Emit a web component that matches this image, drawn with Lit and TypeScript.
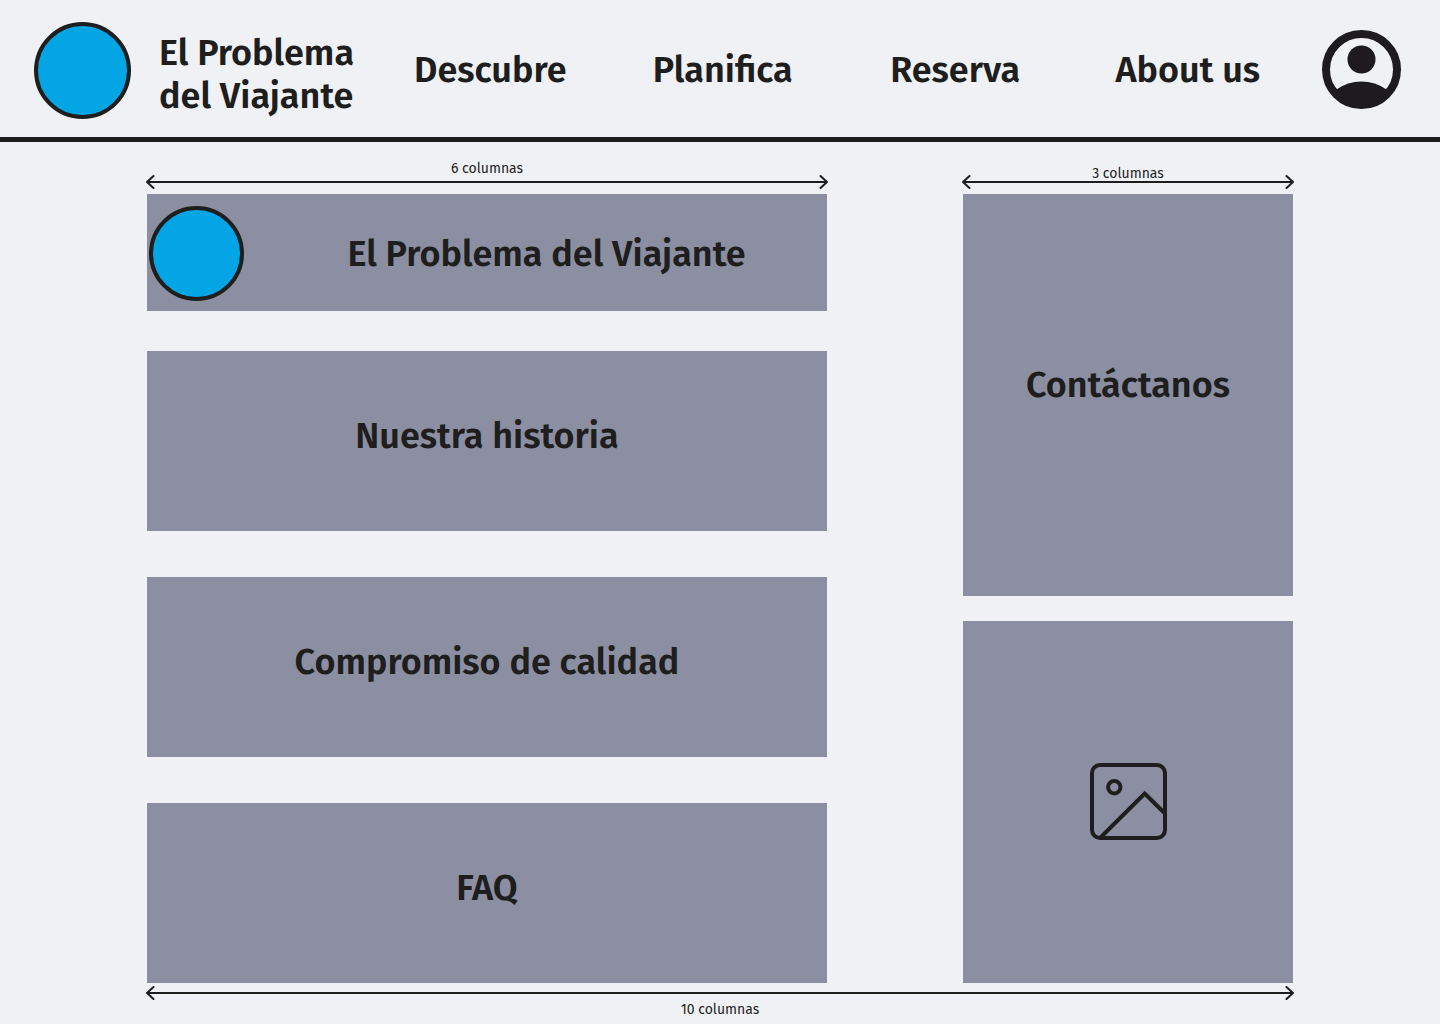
import { LitElement, html, css } from "lit";
import { customElement, property } from "lit/decorators.js";

/** Double-headed arrow that spans a number of grid columns. */
@customElement("column-span")
export class ColumnSpan extends LitElement {
  @property() label = "";
  @property({ reflect: true }) placement: "above" | "close" | "below" = "above";

  static styles = css`
    :host {
      display: flex;
      flex-direction: column;
      align-items: center;
      justify-content: flex-end;
      color: #1e1e1e;
    }
    :host([placement="below"]) {
      flex-direction: column-reverse;
    }
    .label {
      margin-bottom: -3px;
      font-size: 14px;
      line-height: 16px;
    }
    :host([placement="close"]) .label {
      margin-bottom: -8px;
    }
    :host([placement="below"]) .label {
      margin: 1px 0 0;
    }
    .arrow {
      display: flex;
      align-items: center;
      align-self: stretch;
      height: 16px;
      margin: 0 -1px;
    }
    .line {
      flex: 1;
      height: 2px;
      margin: 0 -8px;
      background: currentColor;
    }
    .head {
      flex: none;
      width: 10px;
      height: 16px;
      fill: none;
      stroke: currentColor;
      stroke-width: 2;
      stroke-linecap: round;
      stroke-linejoin: round;
    }
  `;

  render() {
    return html`
      <span class="label">${this.label}</span>
      <div class="arrow" aria-hidden="true">
        <svg class="head" viewBox="0 0 10 16"><path d="M7.5 2 1 8l6.5 6" /></svg>
        <div class="line"></div>
        <svg class="head" viewBox="0 0 10 16"><path d="m2.5 2 6.5 6-6.5 6" /></svg>
      </div>
    `;
  }
}

@customElement("app-root")
export class AppRoot extends LitElement {
  private links = [
    { text: "Descubre", href: "#descubre" },
    { text: "Planifica", href: "#planifica" },
    { text: "Reserva", href: "#reserva" },
    { text: "About us", href: "#about" },
  ];

  private sections = ["Nuestra historia", "Compromiso de calidad", "FAQ"];

  static styles = css`
    :host {
      display: block;
      min-height: 100vh;
      background: #eff1f5;
      color: #1e1e1e;
      font-family: "Fira Sans", "Noto Sans", "Open Sans", sans-serif;
    }
    * {
      box-sizing: border-box;
    }
    .header {
      display: flex;
      align-items: center;
      min-height: 142px;
      padding: 0 39px 0 34px;
      border-bottom: 5px solid #1e1e1e;
    }
    a {
      color: inherit;
      text-decoration: none;
    }
    .brand,
    .link,
    .title {
      margin: 0;
      font-size: 36px;
      font-weight: 600;
      line-height: 43px;
    }
    .brand {
      display: flex;
      align-items: center;
      gap: 28px;
      width: 340px;
      padding-top: 3px;
    }
    .logo {
      flex: none;
      width: 97px;
      height: 97px;
      border: 4px solid #1e1e1e;
      border-radius: 50%;
      background: #04a5e5;
    }
    .brand-name {
      padding-top: 10px;
      white-space: nowrap;
    }
    .nav {
      flex: 1;
      display: grid;
      grid-template-columns: repeat(4, 1fr);
      margin-right: 18px;
      padding-top: 3px;
      text-align: center;
    }
    .link {
      white-space: nowrap;
    }
    .account {
      flex: none;
      width: 79px;
      height: 79px;
      margin-top: 1px;
      padding: 0;
      border: 0;
      background: none;
      color: #1d1b20;
      cursor: pointer;
    }
    .icon {
      display: block;
      width: 100%;
      height: 100%;
    }
    .main {
      display: grid;
      grid-template-columns: 68fr 33fr;
      column-gap: 136px;
      padding: 0 147px;
    }
    .span {
      height: 52px;
      padding-bottom: 4px;
    }
    .span-all {
      grid-column: 1 / -1;
      padding-top: 2px;
    }
    .column {
      display: flex;
      flex-direction: column;
      gap: 46px;
    }
    .side {
      gap: 25px;
    }
    .card {
      display: flex;
      align-items: center;
      justify-content: center;
      min-height: 180px;
      padding-bottom: 10px;
      background: #8c8fa1;
    }
    .hero {
      min-height: 117px;
      margin-bottom: -6px;
      padding: 2px 0 0 2px;
    }
    .hero .logo {
      width: 95px;
      height: 95px;
    }
    .hero .title {
      flex: 1;
      padding: 1px 0 0 22px;
      text-align: center;
    }
    .contact {
      min-height: 402px;
      padding-bottom: 20px;
    }
    .picture {
      flex: 1;
      min-height: 362px;
      padding-bottom: 2px;
    }
    .picture-icon {
      width: 77px;
      height: 77px;
      fill: none;
      stroke: #1e1e1e;
      stroke-width: 4;
    }
  `;

  render() {
    return html`
      <header class="header">
        <a class="brand" href="#inicio">
          <span class="logo"></span>
          <span class="brand-name">El Problema<br />del Viajante</span>
        </a>
        <nav class="nav">
          ${this.links.map((l) => html`<a class="link" href=${l.href}>${l.text}</a>`)}
        </nav>
        <button class="account" type="button" aria-label="Cuenta">
          <svg class="icon" viewBox="0 0 79 79" fill="currentColor">
            <circle cx="39.5" cy="39.5" r="35.5" fill="none" stroke="currentColor" stroke-width="8" />
            <circle cx="39.5" cy="29.5" r="14" />
            <path d="M14.5 59.5a43 43 0 0 1 50 0Q54 74 39.5 74T14.5 59.5Z" />
          </svg>
        </button>
      </header>
      <main class="main">
        <column-span class="span" label="6 columnas"></column-span>
        <column-span class="span" label="3 columnas" placement="close"></column-span>
        <div class="column">
          <section class="card hero">
            <span class="logo"></span>
            <h1 class="title">El Problema del Viajante</h1>
          </section>
          ${this.sections.map(
            (s) => html`<section class="card"><h2 class="title">${s}</h2></section>`,
          )}
        </div>
        <aside class="column side">
          <section class="card contact"><h2 class="title">Contáctanos</h2></section>
          <section class="card picture">
            <svg class="picture-icon" viewBox="0 0 77 77" aria-hidden="true">
              <rect x="2" y="2" width="73" height="73" rx="8" />
              <circle cx="24.3" cy="24.3" r="6.2" />
              <path d="M10.5 74.5 54.7 30.5 75 50.5" />
            </svg>
          </section>
        </aside>
        <column-span class="span-all" label="10 columnas" placement="below"></column-span>
      </main>
    `;
  }
}
